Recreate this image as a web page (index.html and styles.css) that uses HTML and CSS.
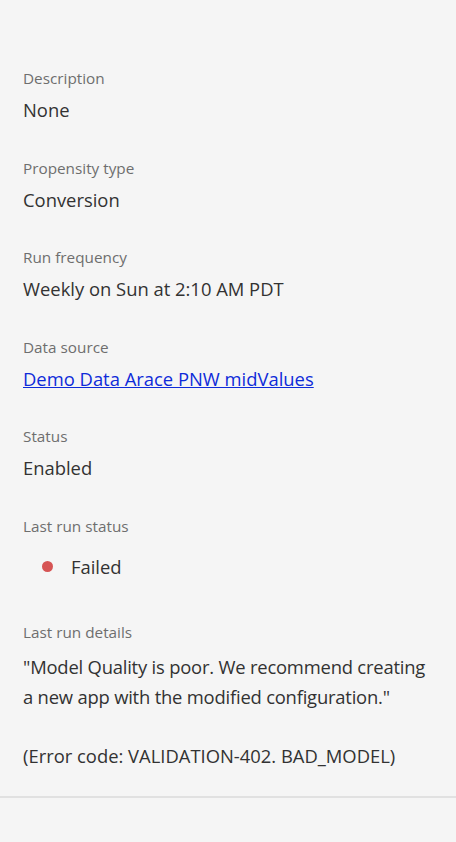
FILE: index.html
```
<!DOCTYPE html>
<html>
<head>
<meta charset="utf-8">
<link rel="stylesheet" href="styles.css">
</head>
<body>
<div class="panel">
  <div class="fields">
    <div class="field">
      <div class="label">Description</div>
      <div class="value">None</div>
    </div>
    <div class="field">
      <div class="label">Propensity type</div>
      <div class="value">Conversion</div>
    </div>
    <div class="field">
      <div class="label">Run frequency</div>
      <div class="value">Weekly on Sun at 2:10 AM PDT</div>
    </div>
    <div class="field">
      <div class="label">Data source</div>
      <div class="value"><a class="link" href="#">Demo Data Arace PNW midValues</a></div>
    </div>
    <div class="field">
      <div class="label">Status</div>
      <div class="value">Enabled</div>
    </div>
    <div class="field">
      <div class="label">Last run status</div>
      <div class="value status"><span class="dot"></span><span>Failed</span></div>
    </div>
    <div class="field">
      <div class="label">Last run details</div>
      <div class="value details">
        <p>"Model Quality is poor. We recommend creating<br>a new app with the modified configuration."</p>
        <p>(Error code: VALIDATION-402. BAD_MODEL)</p>
      </div>
    </div>
  </div>
</div>
</body>
</html>
```
FILE: styles.css
```
html, body {
  margin: 0;
  padding: 0;
  background: #f5f5f5;
}
body {
  font-family: "Open Sans", "Noto Sans", sans-serif;
  width: 456px;
  height: 842px;
  overflow: hidden;
}
.panel {
  padding: 68px 23px 26px 23px;
  border-bottom: 2px solid #e1e1e1;
}
.fields {
  display: flex;
  flex-direction: column;
  gap: 35.5px;
}
.field {
  display: flex;
  flex-direction: column;
  gap: 10px;
}
.label {
  font-size: 15.3px;
  line-height: 20px;
  color: #6e6e6e;
}
.value {
  font-size: 18.4px;
  line-height: 24px;
  color: #323232;
}
.link {
  color: #0e2bd9;
  text-decoration: underline;
}
.status {
  display: flex;
  align-items: center;
  padding: 9px 0 8px 19px;
  gap: 18px;
}
.dot {
  width: 11px;
  height: 11px;
  border-radius: 50%;
  background: #d65454;
  flex: none;
}
.details {
  line-height: 29.5px;
}
.details p {
  margin: 0;
  white-space: nowrap;
}
.details p:first-child {
  letter-spacing: -0.2px;
}
.details p + p {
  margin-top: 29.5px;
}
```
